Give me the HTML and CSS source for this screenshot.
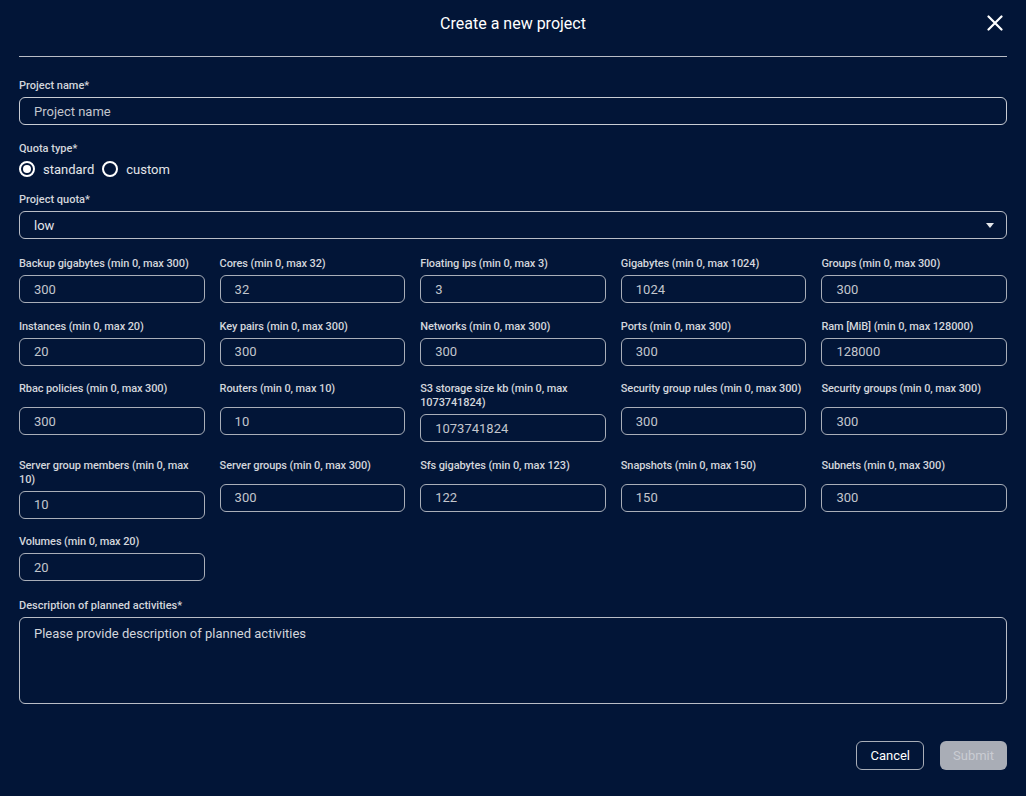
FILE: index.html
```html
<!DOCTYPE html>
<html lang="en">
<head>
    <meta charset="UTF-8">
    <meta name="viewport" content="width=device-width, initial-scale=1.0">
    <title>Create a new project</title>
    <link rel="stylesheet" href="styles.css">
</head>
<body>
    <div class="dialog">
        <div class="dialog-header">
            <h1>Create a new project</h1>
            <button class="close-btn" aria-label="Close">
                <svg width="16" height="16" viewBox="0 0 16 16">
                    <path d="M1.5 1.5 L14.5 14.5 M14.5 1.5 L1.5 14.5" stroke="#fff" stroke-width="2.2" stroke-linecap="round"/>
                </svg>
            </button>
        </div>

        <form class="project-form">
            <div class="field">
                <label>Project name*</label>
                <input class="text-input focused" type="text" placeholder="Project name">
            </div>

            <div class="field field-radio">
                <label>Quota type*</label>
                <div class="radio-row">
                    <span class="radio checked"></span><span class="radio-text">standard</span>
                    <span class="radio"></span><span class="radio-text">custom</span>
                </div>
            </div>

            <div class="field">
                <label>Project quota*</label>
                <div class="select-box">
                    <span>low</span>
                    <span class="caret"></span>
                </div>
            </div>

            <div class="quota-grid">
                <div class="cell"><label>Backup gigabytes (min 0, max 300)</label><div class="cell-input"><input class="text-input" value="300"></div></div>
                <div class="cell"><label>Cores (min 0, max 32)</label><div class="cell-input"><input class="text-input" value="32"></div></div>
                <div class="cell"><label>Floating ips (min 0, max 3)</label><div class="cell-input"><input class="text-input" value="3"></div></div>
                <div class="cell"><label>Gigabytes (min 0, max 1024)</label><div class="cell-input"><input class="text-input" value="1024"></div></div>
                <div class="cell"><label>Groups (min 0, max 300)</label><div class="cell-input"><input class="text-input" value="300"></div></div>

                <div class="cell"><label>Instances (min 0, max 20)</label><div class="cell-input"><input class="text-input" value="20"></div></div>
                <div class="cell"><label>Key pairs (min 0, max 300)</label><div class="cell-input"><input class="text-input" value="300"></div></div>
                <div class="cell"><label>Networks (min 0, max 300)</label><div class="cell-input"><input class="text-input" value="300"></div></div>
                <div class="cell"><label>Ports (min 0, max 300)</label><div class="cell-input"><input class="text-input" value="300"></div></div>
                <div class="cell"><label>Ram [MiB] (min 0, max 128000)</label><div class="cell-input"><input class="text-input" value="128000"></div></div>

                <div class="cell"><label>Rbac policies (min 0, max 300)</label><div class="cell-input"><input class="text-input" value="300"></div></div>
                <div class="cell"><label>Routers (min 0, max 10)</label><div class="cell-input"><input class="text-input" value="10"></div></div>
                <div class="cell"><label>S3 storage size kb (min 0, max 1073741824)</label><div class="cell-input"><input class="text-input" value="1073741824"></div></div>
                <div class="cell"><label>Security group rules (min 0, max 300)</label><div class="cell-input"><input class="text-input" value="300"></div></div>
                <div class="cell"><label>Security groups (min 0, max 300)</label><div class="cell-input"><input class="text-input" value="300"></div></div>

                <div class="cell"><label>Server group members (min 0, max 10)</label><div class="cell-input"><input class="text-input" value="10"></div></div>
                <div class="cell"><label>Server groups (min 0, max 300)</label><div class="cell-input"><input class="text-input" value="300"></div></div>
                <div class="cell"><label>Sfs gigabytes (min 0, max 123)</label><div class="cell-input"><input class="text-input" value="122"></div></div>
                <div class="cell"><label>Snapshots (min 0, max 150)</label><div class="cell-input"><input class="text-input" value="150"></div></div>
                <div class="cell"><label>Subnets (min 0, max 300)</label><div class="cell-input"><input class="text-input" value="300"></div></div>

                <div class="cell"><label>Volumes (min 0, max 20)</label><div class="cell-input"><input class="text-input" value="20"></div></div>
            </div>

            <div class="field">
                <label>Description of planned activities*</label>
                <textarea class="text-area" placeholder="Please provide description of planned activities"></textarea>
            </div>

            <div class="actions">
                <button type="button" class="btn btn-outline">Cancel</button>
                <button type="button" class="btn btn-disabled" disabled>Submit</button>
            </div>
        </form>
    </div>
</body>
</html>
```

FILE: styles.css
```css
body {
    margin: 0;
    background-color: #021537;
    font-family: Roboto, "Liberation Sans", Arial, sans-serif;
    color: #fff;
}
.dialog {
    padding: 0 19px;
}
.dialog-header {
    position: relative;
    height: 57px;
    box-sizing: border-box;
    padding-top: 14px;
    border-bottom: 1px solid #b9bdc6;
    text-align: center;
}
.dialog-header h1 {
    margin: 0;
    font-size: 16px;
    line-height: 20px;
    font-weight: 400;
    color: #fff;
}
.close-btn {
    position: absolute;
    right: 4px;
    top: 15px;
    width: 16px;
    height: 16px;
    padding: 0;
    border: none;
    background: none;
    cursor: pointer;
}
.close-btn svg {
    display: block;
}
.project-form {
    padding-top: 22px;
}
label {
    display: block;
    font-size: 11px;
    line-height: 14px;
    font-weight: 500;
    color: #d3d6dc;
    margin-bottom: 4px;
}
.field {
    margin-bottom: 18px;
}
.field:first-child {
    margin-bottom: 17px;
}
.field-radio {
    margin-bottom: 14px;
}
.field-radio label {
    margin-bottom: 3px;
}
.text-input {
    display: block;
    width: 100%;
    height: 28px;
    box-sizing: border-box;
    padding: 0 14px;
    border: 1px solid #a9aeb8;
    border-radius: 6px;
    background: transparent;
    color: #c3c6cd;
    font-family: inherit;
    font-size: 13px;
    outline: none;
}
.text-input::placeholder {
    color: #c3c6cd;
}
.text-input.focused {
    border-color: #c9ccd3;
}
.radio-row {
    display: flex;
    align-items: center;
    height: 20px;
}
.radio {
    width: 16px;
    height: 16px;
    box-sizing: border-box;
    border: 2px solid #fff;
    border-radius: 50%;
    position: relative;
}
.radio.checked::after {
    content: "";
    position: absolute;
    left: 2px;
    top: 2px;
    width: 8px;
    height: 8px;
    border-radius: 50%;
    background: #fff;
}
.radio-text {
    font-size: 13px;
    color: #e4e6ea;
    margin: 0 8px 0 8px;
}
.select-box {
    display: flex;
    align-items: center;
    justify-content: space-between;
    height: 28px;
    box-sizing: border-box;
    padding: 0 12px 0 14px;
    border: 1px solid #b9bdc6;
    border-radius: 6px;
    font-size: 13px;
    color: #e4e6ea;
}
.caret {
    width: 0;
    height: 0;
    border-left: 4.5px solid transparent;
    border-right: 4.5px solid transparent;
    border-top: 5px solid #e4e6ea;
}
.quota-grid {
    display: grid;
    grid-template-columns: repeat(5, 1fr);
    column-gap: 15px;
    row-gap: 16.5px;
    margin-bottom: 18px;
}
.cell {
    display: flex;
    flex-direction: column;
}
.cell label {
    letter-spacing: -0.1px;
}
.cell-input {
    flex: 1;
    display: flex;
    align-items: center;
}
.text-area {
    display: block;
    width: 100%;
    height: 87px;
    box-sizing: border-box;
    padding: 8px 14px;
    border: 1px solid #b9bdc6;
    border-radius: 6px;
    background: transparent;
    color: #d3d6dc;
    font-family: inherit;
    font-size: 13px;
    line-height: 16px;
    resize: none;
    outline: none;
}
.text-area::placeholder {
    color: #d3d6dc;
}
.actions {
    display: flex;
    justify-content: flex-end;
    gap: 16px;
    margin-top: 37px;
}
.btn {
    height: 29px;
    padding: 0 13px;
    border-radius: 6px;
    font-family: inherit;
    font-size: 13px;
    cursor: pointer;
}
.btn-outline {
    background: transparent;
    color: #fff;
    border: 1px solid #a9aeb8;
}
.btn-disabled {
    background: #a9adb6;
    color: #c9ccd3;
    border: none;
    width: 67px;
    cursor: default;
}
```
